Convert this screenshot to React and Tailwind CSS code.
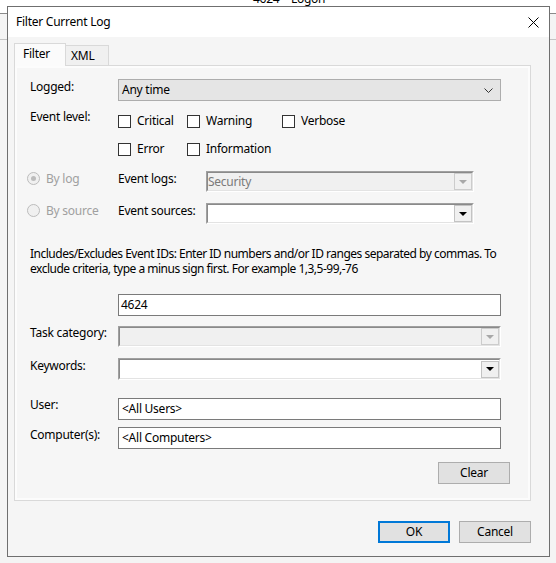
import React from 'react';

const Checkbox = ({ label, width }) => (
  <div className={`flex items-center ${width}`}>
    <span className="w-[13px] h-[13px] border border-[#333333] bg-white shrink-0" />
    <span className="ml-[6px] leading-[16px]">{label}</span>
  </div>
);

const Radio = ({ label, checked }) => (
  <div className="flex items-start w-[91px] -ml-[3px]">
    <span className="mt-px w-[13px] h-[13px] rounded-full border border-[#bcbcbc] bg-[#f0f0f0] flex items-center justify-center shrink-0">
      {checked && <span className="w-[5px] h-[5px] rounded-full bg-[#bcbcbc]" />}
    </span>
    <span className="ml-[6px] leading-[16px] text-[#a0a0a0]">{label}</span>
  </div>
);

// sunken combo box, old style
const Combo = ({ width, height, value, disabled }) => (
  <div
    className={`${width} ${height} border border-t-[#a0a0a0] border-l-[#a0a0a0] border-b-white border-r-white`}
  >
    <div
      className={`h-full flex items-center border border-t-[#8a8a8a] border-l-[#8a8a8a] border-b-[#e3e3e3] border-r-[#e3e3e3] ${
        disabled ? 'bg-[#f0f0f0]' : 'bg-white'
      }`}
    >
      <span className="flex-1 leading-[16px] text-[#7a7a7a]">{value}</span>
      <span
        className={`w-[18px] h-[17px] flex items-center justify-center border ${
          disabled ? 'border-[#cccccc] bg-[#f0f0f0]' : 'border-[#c3c3c3] bg-[#f0f0f0]'
        }`}
      >
        <span
          className={`w-0 h-0 border-x-[4px] border-t-[4px] border-x-transparent ${
            disabled ? 'border-t-[#a8a8a8]' : 'border-t-black'
          }`}
        />
      </span>
    </div>
  </div>
);

const TextBox = ({ value, pad = 'pl-[2px]' }) => (
  <div className={`w-[383px] h-[22px] border border-[#7a7a7a] bg-white flex items-center ${pad}`}>
    <span className="leading-[16px]">{value}</span>
  </div>
);

const Button = ({ children, focused, className = '' }) => (
  <div
    className={`w-[72px] h-[22px] flex items-center justify-center bg-[#e1e1e1] ${
      focused ? 'border-2 border-[#0078d7]' : 'border border-[#adadad]'
    } ${className}`}
  >
    <span className="leading-[16px]">{children}</span>
  </div>
);

export default function App() {
  return (
    <div className="relative w-[556px] h-[563px] overflow-hidden bg-[#f4f4f4] font-['Noto_Sans',sans-serif] text-[12px] tracking-[-0.25px] text-black">
      {/* window behind the dialog */}
      <div className="absolute left-0 top-0 w-full h-[13px] bg-white" />
      <div className="absolute left-0 top-[13px] w-full h-px bg-[#8a8a8a]" />
      <div className="absolute left-0 top-[39px] w-full h-px bg-[#c4c4c4]" />
      <div className="absolute left-[253px] top-[-9px] leading-[16px] whitespace-pre">4624    Logon</div>

      {/* dialog */}
      <div className="absolute left-[7px] top-[6px] w-[543px] h-[551px] border border-[#6f6f6f] bg-[#f5f5f5] flex flex-col">
        {/* title bar */}
        <div className="h-[30px] bg-white flex items-center justify-between pl-[8px] pr-[10px]">
          <span className="text-[12px] leading-[16px]">Filter Current Log</span>
          <svg width="11" height="11" viewBox="0 0 11 11">
            <path d="M0.5 0.5 L10.5 10.5 M10.5 0.5 L0.5 10.5" stroke="#000" strokeWidth="1" />
          </svg>
        </div>

        <div className="flex flex-col px-[6px] pt-[6px]">
          {/* tabs */}
          <div className="flex items-end h-[22px]">
            <div className="relative z-10 w-[52px] h-[23px] -mb-px border border-b-0 border-[#d9d9d9] bg-[#fbfbfb] pl-[8px] pt-[2px] leading-[16px]">
              Filter
            </div>
            <div className="w-[44px] h-[20px] -ml-px border border-b-0 border-[#d9d9d9] bg-[#f0f0f0] pl-[5px] pt-[2px] leading-[16px]">
              XML
            </div>
          </div>

          {/* tab page */}
          <div className="w-[517px] h-[436px] border border-[#d9d9d9]">
            <div className="h-full border-2 border-[#fcfcfc] bg-[#f6f6f6] px-[13px] flex flex-col">
              <div className="mt-[11px] flex h-[22px]">
                <span className="w-[88px] leading-[16px]">Logged:</span>
                <div className="w-[383px] h-[22px] border border-[#adadad] bg-[#e5e5e5] flex items-center pl-[3px] pr-[7px]">
                  <span className="flex-1 leading-[16px]">Any time</span>
                  <svg width="9" height="5" viewBox="0 0 9 5">
                    <path d="M0.5 0.5 L4.5 4.5 L8.5 0.5" stroke="#333" strokeWidth="1" fill="none" />
                  </svg>
                </div>
              </div>

              <div className="mt-[12px] flex">
                <span className="w-[88px] -mt-[4px] leading-[16px]">Event level:</span>
                <div className="flex flex-col gap-[12px]">
                  <div className="flex h-[16px]">
                    <Checkbox label="Critical" width="w-[69px]" />
                    <Checkbox label="Warning" width="w-[95px]" />
                    <Checkbox label="Verbose" width="w-[80px]" />
                  </div>
                  <div className="flex h-[16px]">
                    <Checkbox label="Error" width="w-[69px]" />
                    <Checkbox label="Information" width="w-[95px]" />
                  </div>
                </div>
              </div>

              <div className="mt-[14px] flex h-[21px]">
                <Radio label="By log" checked />
                <span className="w-[88px] leading-[16px]">Event logs:</span>
                <Combo width="w-[268px]" height="h-[21px]" value="Security" disabled />
              </div>

              <div className="mt-[11px] flex h-[21px]">
                <Radio label="By source" />
                <span className="w-[88px] leading-[16px]">Event sources:</span>
                <Combo width="w-[268px]" height="h-[21px]" value="" />
              </div>

              <p className="mt-[22px] w-[492px] leading-[15px] tracking-[-0.5px]">
                Includes/Excludes Event IDs: Enter ID numbers and/or ID ranges separated by commas. To exclude criteria, type a minus sign first. For example 1,3,5-99,-76
              </p>

              <div className="mt-[18px] ml-[88px]">
                <TextBox value="4624" />
              </div>

              <div className="mt-[10px] flex h-[21px]">
                <span className="w-[88px] -mt-px leading-[16px]">Task category:</span>
                <Combo width="w-[383px]" height="h-[21px]" value="" disabled />
              </div>

              <div className="mt-[11px] flex h-[22px]">
                <span className="w-[88px] leading-[16px]">Keywords:</span>
                <Combo width="w-[383px]" height="h-[22px]" value="" />
              </div>

              <div className="mt-[18px] flex h-[22px]">
                <span className="w-[88px] -mt-px leading-[16px]">User:</span>
                <TextBox value="<All Users>" pad="pl-[3px]" />
              </div>

              <div className="mt-[7px] flex h-[22px]">
                <span className="w-[88px] leading-[16px]">Computer(s):</span>
                <TextBox value="<All Computers>" pad="pl-[3px]" />
              </div>

              <Button className="mt-[13px] ml-[408px] h-[21px]">Clear</Button>
            </div>
          </div>

          {/* dialog buttons */}
          <div className="w-[517px] mt-[20px] flex justify-end gap-[9px]">
            <Button focused>OK</Button>
            <Button>Cancel</Button>
          </div>
        </div>
      </div>
    </div>
  );
}
